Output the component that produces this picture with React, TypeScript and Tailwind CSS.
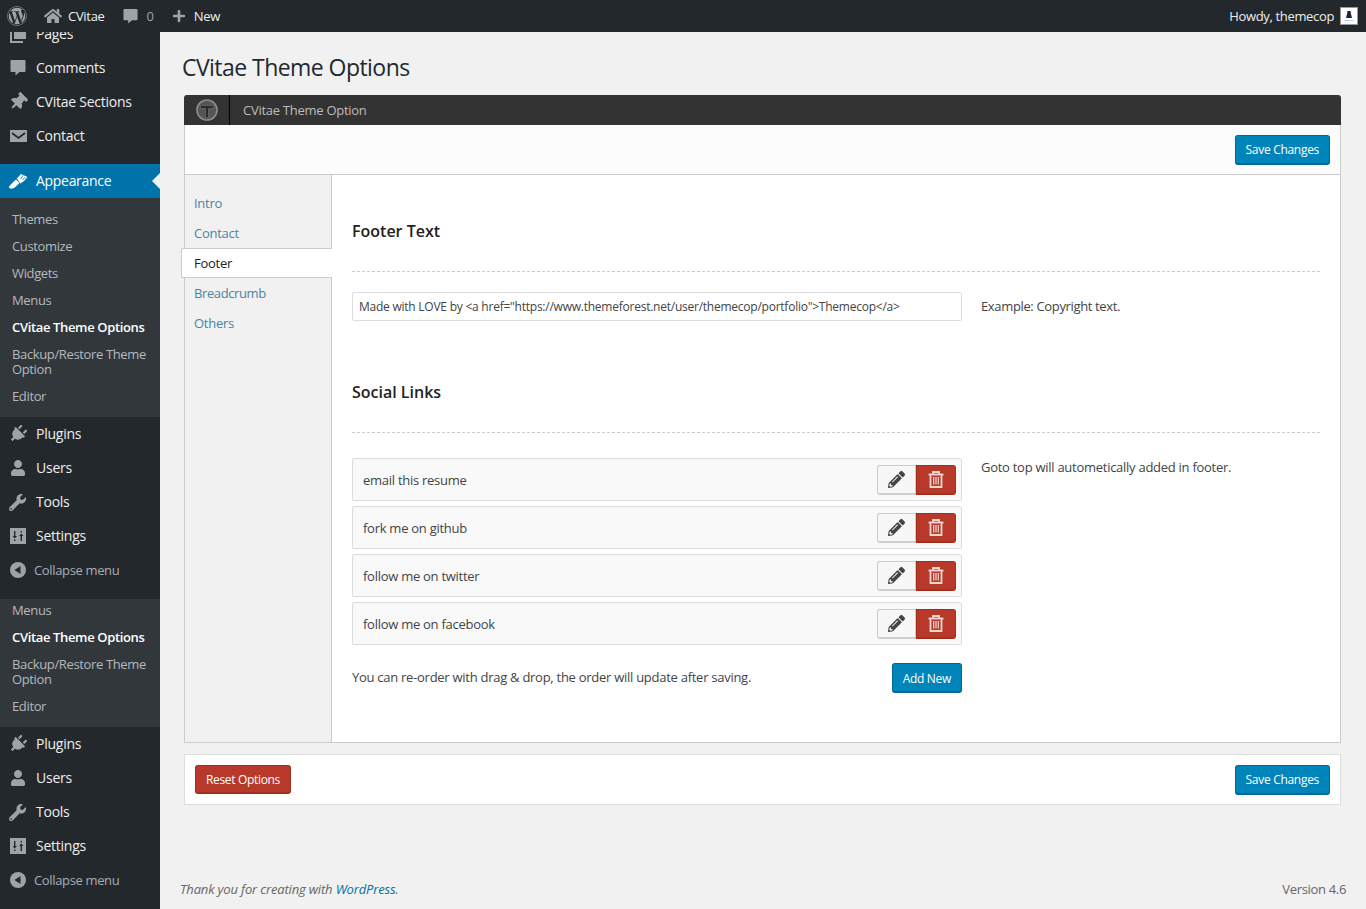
import { FaHome, FaPencilAlt, FaPlug, FaPlus, FaThumbtack, FaUser, FaWordpress, FaWrench } from "react-icons/fa";
import type { ReactNode } from "react";

function PagesIcon() {
  return (
    <svg width="20" height="20" viewBox="0 0 20 20" fill="#9ea3a8">
      <path d="M6 2h12v13H6z M2 6h2v11h11v2H2z" />
    </svg>
  );
}

function CommentIcon({ size = 16 }: { size?: number }) {
  return (
    <svg width={size} height={size} viewBox="0 0 15 16" fill="#9ea3a8">
      <path d="M1 0h13a1 1 0 0 1 1 1v10a1 1 0 0 1-1 1H9l-4 3.5V12H1a1 1 0 0 1-1-1V1a1 1 0 0 1 1-1z" />
    </svg>
  );
}

function MailIcon() {
  return (
    <svg width="17" height="12" viewBox="0 0 17 12">
      <rect width="17" height="12" fill="#9ea3a8" />
      <path d="M2 3l6.5 5L15 3" fill="none" stroke="#23282d" strokeWidth="1.6" />
    </svg>
  );
}

function BrushIcon() {
  return (
    <svg width="20" height="20" viewBox="0 0 20 20" fill="#fff">
      <path d="M1 15.5C3 13 6 10.5 8 8.5l3.5 3.5c-2 2-5 5.5-7.5 5.5-1.2.5-3.5-.5-3-2z" />
      <path d="M8.8 7.5L13 3l6.5 3-3.5 4-3.5 2.5z" />
      <path d="M15 4.5l-2.5 3.5M17.3 6l-2.8 3" stroke="#0073aa" strokeWidth="0.8" fill="none" />
    </svg>
  );
}

function SettingsIcon() {
  return (
    <svg width="16" height="16" viewBox="0 0 16 16">
      <rect width="16" height="16" fill="#9ea3a8" />
      <path d="M4 3h1.4v5H7l-2.3 2.6L2.6 8H4z M4 11.5h1.4V13H4z" fill="#23282d" />
      <path d="M10.6 13V8H9l2.3-2.6L13.4 8H12v5z M10.6 3H12v1.5h-1.4z" fill="#23282d" />
    </svg>
  );
}

function CollapseIcon() {
  return (
    <svg width="16" height="16" viewBox="0 0 16 16">
      <circle cx="8" cy="8" r="8" fill="#9ea3a8" />
      <path d="M10.5 4v8L4.5 8z" fill="#23282d" />
    </svg>
  );
}

function TrashIcon() {
  return (
    <svg width="16" height="17" viewBox="0 0 16 17" fill="none" stroke="#f6d5cf" strokeWidth="1.8">
      <path d="M0.5 3.5h15" />
      <path d="M5 3.5V1h6v2.5" />
      <path d="M2.5 3.5V16h11V3.5" />
      <path d="M5.7 6v7.5M8 6v7.5M10.3 6v7.5" strokeWidth="1.2" />
    </svg>
  );
}

function ThemeLogo() {
  return (
    <svg width="22" height="22" viewBox="0 0 22 22">
      <circle cx="11" cy="11" r="10" fill="#555" stroke="#8d8d8d" strokeWidth="1.6" />
      <path d="M4.5 6.5h13v3h-5v9h-3v-9h-5z" fill="#2b2b2b" stroke="#777" strokeWidth="0.6" />
    </svg>
  );
}

function MenuItem({ icon, label }: { icon: ReactNode; label: string }) {
  return (
    <div className="h-[34px] flex items-center text-[14px] text-[#eee] tracking-[-0.25px]">
      <span className="w-[36px] pl-[8px] flex items-center justify-start text-[#9ea3a8] text-[18px]">{icon}</span>
      <span className="pb-[2px]">{label}</span>
    </div>
  );
}

function Collapse() {
  return (
    <div className="h-[34px] flex items-center text-[13px] text-[#a8adb2] tracking-[-0.35px]">
      <span className="w-[34px] pl-[10px] flex items-center">
        <CollapseIcon />
      </span>
      <span className="pt-[1px]">Collapse menu</span>
    </div>
  );
}

function SubItem({ label, active }: { label: string; active?: boolean }) {
  return (
    <div className={`pl-[12px] pr-[10px] py-[6px] leading-[15px] text-[13px] ${active ? "text-white font-semibold tracking-[-0.35px]" : "text-[#b4b9be] tracking-[-0.36px]"}`}>
      {label}
    </div>
  );
}

function LowerMenu() {
  return (
    <>
      <MenuItem icon={<FaPlug className="rotate-45 ml-[1px]" />} label="Plugins" />
      <MenuItem icon={<FaUser className="text-[16px] ml-[2px]" />} label="Users" />
      <MenuItem icon={<FaWrench className="text-[17px] ml-[1px]" />} label="Tools" />
      <MenuItem icon={<span className="ml-[2px]"><SettingsIcon /></span>} label="Settings" />
      <Collapse />
    </>
  );
}

function Sidebar() {
  return (
    <aside className="w-[160px] shrink-0 bg-[#23282d] overflow-hidden">
      <div className="-mt-[15px]">
        <MenuItem icon={<PagesIcon />} label="Pages" />
      </div>
      <MenuItem icon={<span className="ml-[2px] flex"><CommentIcon /></span>} label="Comments" />
      <MenuItem icon={<FaThumbtack className="rotate-45 ml-[1px]" />} label="CVitae Sections" />
      <MenuItem icon={<span className="ml-[2px] flex"><MailIcon /></span>} label="Contact" />
      <div className="relative mt-[11px] h-[34px] bg-[#0073aa] flex items-center text-[14px] text-white tracking-[-0.3px]">
        <span className="w-[36px] pl-[8px] flex items-center">
          <BrushIcon />
        </span>
        <span className="pb-[2px]">Appearance</span>
        <span className="absolute right-0 top-[9px] border-y-[8px] border-r-[8px] border-y-transparent border-r-[#f1f1f1]" />
      </div>
      <div className="bg-[#32373c] h-[219px] pt-[8px]">
        <SubItem label="Themes" />
        <SubItem label="Customize" />
        <SubItem label="Widgets" />
        <SubItem label="Menus" />
        <SubItem label="CVitae Theme Options" active />
        <SubItem label="Backup/Restore Theme Option" />
        <SubItem label="Editor" />
      </div>
      <LowerMenu />
      <div className="bg-[#32373c] mt-[12px] h-[128px] flow-root">
        <div className="-mt-[2px]">
          <SubItem label="Menus" />
          <SubItem label="CVitae Theme Options" active />
          <SubItem label="Backup/Restore Theme Option" />
          <SubItem label="Editor" />
        </div>
      </div>
      <LowerMenu />
    </aside>
  );
}

function AdminBar() {
  return (
    <header className="h-[32px] shrink-0 bg-[#23282d] flex items-center text-[13px] text-[#eee] tracking-[-0.3px] relative z-10">
      <FaWordpress className="ml-[7px] text-[20px] text-[#9ea3a8]" />
      <FaHome className="ml-[17px] text-[18px] text-[#9ea3a8]" />
      <span className="ml-[6px] pt-[1px]">CVitae</span>
      <span className="ml-[18px] flex">
        <CommentIcon size={15} />
      </span>
      <span className="ml-[9px] pt-[1px] text-[#9ea3a8]">0</span>
      <FaPlus className="ml-[18px] text-[14px] text-[#9ea3a8]" />
      <span className="ml-[8px] pt-[1px]">New</span>
      <span className="ml-auto pt-[1px] tracking-[-0.35px]">Howdy, themecop</span>
      <span className="ml-[6px] mr-[8px] w-[18px] h-[18px] bg-white border border-[#999] flex items-center justify-center">
        <svg width="16" height="16" viewBox="0 0 16 16">
          <path d="M6.5 3h3l.5 3 1 4H5l1-4z" fill="#1f2148" />
          <rect x="3" y="12" width="10" height="1" fill="#bcd9ee" />
        </svg>
      </span>
    </header>
  );
}

function BlueButton({ label }: { label: string }) {
  return (
    <button className="h-[30px] px-[10px] pt-[2px] bg-[#0085ba] border border-[#006799] border-b-2 rounded-[3px] text-[12px] text-white leading-none tracking-[-0.3px]">
      {label}
    </button>
  );
}

function SocialRow({ label }: { label: string }) {
  return (
    <div className="h-[43px] bg-[#f9f9f9] border border-[#ddd] rounded-[2px] flex items-center pl-[10px] pr-[5px] text-[13px] text-[#444]">
      <span className="pt-[2px]">{label}</span>
      <div className="ml-auto flex">
        <span className="w-[39px] h-[30px] bg-[#f7f7f7] border border-[#ccc] border-b-2 rounded-l-[3px] flex items-center justify-center text-[#444] text-[17px]">
          <FaPencilAlt />
        </span>
        <span className="w-[40px] h-[30px] bg-[#b8392a] border border-[#a1301f] border-b-2 rounded-r-[3px] flex items-center justify-center">
          <TrashIcon />
        </span>
      </div>
    </div>
  );
}

function Panel() {
  return (
    <div className="ml-[24px] mr-[25px] mt-[13px] rounded-t-[3px]">
      <div className="h-[30px] bg-[#333] rounded-t-[3px] flex items-center">
        <span className="w-[46px] h-full flex items-center justify-center border-r border-black">
          <ThemeLogo />
        </span>
        <span className="ml-[13px] pt-[2px] text-[13px] text-[#bbb]">CVitae Theme Option</span>
      </div>
      <div className="border-x border-b border-[#ccc]">
        <div className="h-[50px] bg-[#fcfcfc] border-b border-[#ccc] flex items-center justify-end pr-[10px]">
          <BlueButton label="Save Changes" />
        </div>
        <div className="flex h-[567px] bg-white">
          <nav className="w-[147px] shrink-0 bg-[#f1f1f1] border-r border-[#ccc] pt-[13px] text-[13px] text-[#4a84a3]">
            <div className="h-[30px] pl-[9px] pt-[2px] flex items-center">Intro</div>
            <div className="h-[30px] pl-[9px] pt-[2px] flex items-center">Contact</div>
            <div className="relative -ml-[4px] -mr-[1px] h-[30px] pl-[12px] pt-[1px] flex items-center bg-white text-[#222] border border-r-0 border-[#ccc] rounded-l-[2px]">Footer</div>
            <div className="h-[30px] pl-[9px] pt-[2px] flex items-center tracking-[-0.4px]">Breadcrumb</div>
            <div className="h-[30px] pl-[9px] pt-[2px] flex items-center">Others</div>
          </nav>
          <div className="flex-1 pl-[20px] pr-[20px] text-[13px] text-[#444]">
            <h2 className="mt-[44px] h-[24px] leading-[24px] text-[16px] font-semibold text-[#222] tracking-normal">Footer Text</h2>
            <div className="mt-[28px] border-t border-dashed border-[#ccc]" />
            <div className="mt-[20px] flex items-center">
              <div className="w-[610px] h-[29px] px-[6px] bg-white border border-[#ddd] rounded-[2px] flex items-center text-[12px] tracking-[-0.24px] whitespace-pre">
                {'Made with LOVE by <a href="https://www.themeforest.net/user/themecop/portfolio">Themecop</a>'}
              </div>
              <span className="ml-[19px] tracking-[-0.35px]">Example: Copyright text.</span>
            </div>
            <h2 className="mt-[59px] h-[24px] leading-[24px] text-[16px] font-semibold text-[#222] tracking-normal">Social Links</h2>
            <div className="mt-[28px] border-t border-dashed border-[#ccc]" />
            <div className="mt-[25px] flex items-start">
              <div className="w-[610px] flex flex-col gap-[5px]">
                <SocialRow label="email this resume" />
                <SocialRow label="fork me on github" />
                <SocialRow label="follow me on twitter" />
                <SocialRow label="follow me on facebook" />
                <div className="mt-[13px] flex items-center justify-between">
                  <span>You can re-order with drag &amp; drop, the order will update after saving.</span>
                  <BlueButton label="Add New" />
                </div>
              </div>
              <span className="ml-[19px]">Goto top will autometically added in footer.</span>
            </div>
          </div>
        </div>
      </div>
      <div className="mt-[11px] h-[51px] bg-white border border-[#ddd] flex items-center justify-between px-[10px]">
        <button className="h-[29px] px-[10px] pt-[2px] bg-[#b8392a] border border-[#a1301f] border-b-2 rounded-[3px] text-[12px] text-white leading-none tracking-[-0.33px]">
          Reset Options
        </button>
        <BlueButton label="Save Changes" />
      </div>
    </div>
  );
}

export default function App() {
  return (
    <div className="h-[909px] w-[1366px] overflow-hidden flex flex-col bg-[#f1f1f1] tracking-[-0.27px] font-['Open_Sans',sans-serif]">
      <AdminBar />
      <div className="flex flex-1 min-h-0">
        <Sidebar />
        <main className="flex-1 flex flex-col min-w-0">
          <h1 className="ml-[22px] mt-[20px] h-[30px] leading-[30px] text-[23px] text-[#23282d] tracking-[-0.55px]">CVitae Theme Options</h1>
          <Panel />
          <footer className="mt-auto mb-[10px] ml-[20px] mr-[20px] flex justify-between text-[13px] text-[#666]">
            <span className="italic tracking-[-0.17px]">
              Thank you for creating with <span className="text-[#0073aa]">WordPress</span>.
            </span>
            <span className="tracking-[-0.33px]">Version 4.6</span>
          </footer>
        </main>
      </div>
    </div>
  );
}
